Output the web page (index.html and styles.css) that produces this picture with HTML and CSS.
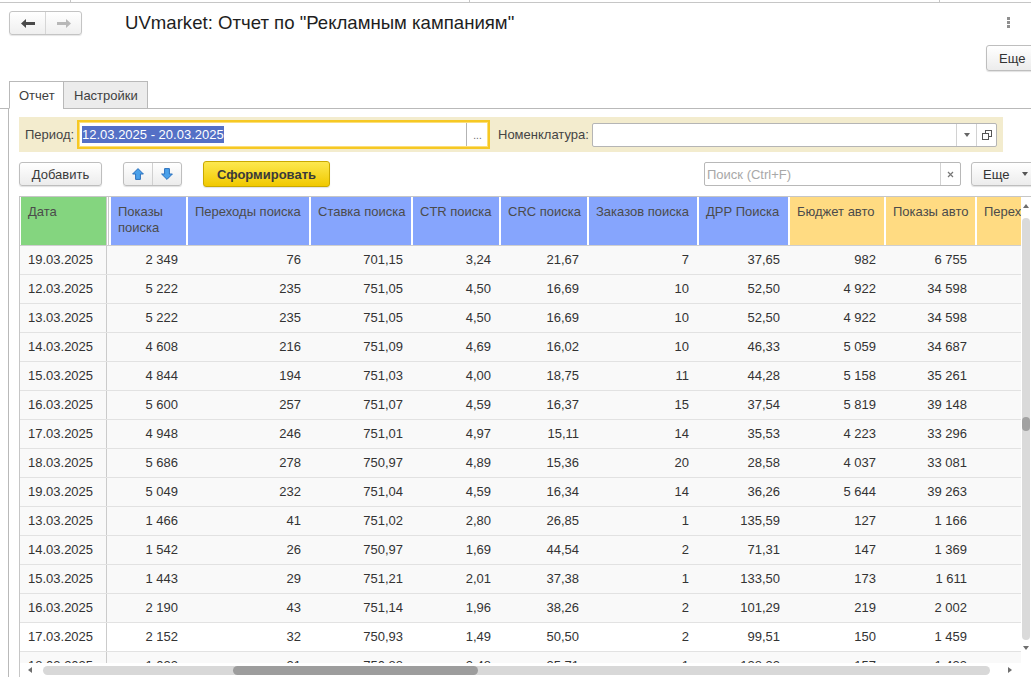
FILE: index.html
```html
<!DOCTYPE html>
<html lang="ru">
<head>
<meta charset="utf-8">
<title>UVmarket: Отчет по "Рекламным кампаниям"</title>
<link rel="stylesheet" href="styles.css">
</head>
<body>
<div class="strip"><div class="strip-seg s1"></div><div class="strip-seg s2"></div><div class="strip-seg s3"></div></div>
<header class="head">
  <div class="nav">
    <button class="nav-btn" aria-label="Назад"><svg width="14" height="9" viewBox="0 0 14 9"><path d="M0 4.5 5 0v3h9v3H5v3z" fill="#4a4a4a"/></svg></button>
    <button class="nav-btn" aria-label="Вперед"><svg width="14" height="9" viewBox="0 0 14 9"><path d="M14 4.5 9 0v3H0v3h9v3z" fill="#b8b8b8"/></svg></button>
  </div>
  <h1 class="title">UVmarket: Отчет по "Рекламным кампаниям"</h1>
  <div class="kebab"><span></span><span></span><span></span></div>
</header>
<div class="cmdbar"><button class="btn btn-top-more">Еще</button></div>
<div class="tabs">
  <div class="tab tab-report">Отчет</div>
  <div class="tab tab-settings">Настройки</div>
</div>
<main class="page">
  <div class="filters">
    <span class="flabel flabel-period">Период:</span>
    <div class="period">
      <span class="sel">12.03.2025 - 20.03.2025</span>
      <span class="period-btn">...</span>
    </div>
    <span class="flabel flabel-nom">Номенклатура:</span>
    <div class="nom">
      <span class="nom-text"></span>
      <span class="nom-btn"><svg width="6" height="4" viewBox="0 0 6 4"><path d="M0 0h6L3 4z" fill="#666"/></svg></span>
      <span class="nom-btn"><svg width="10" height="10" viewBox="0 0 10 10"><rect x="3.5" y=".5" width="6" height="6" fill="none" stroke="#555"/><rect x=".5" y="3.5" width="6" height="6" fill="#fff" stroke="#555"/></svg></span>
    </div>
  </div>
  <div class="toolbar">
    <button class="btn btn-add">Добавить</button>
    <div class="updown">
      <button class="ud-btn" aria-label="Вверх"><svg width="12" height="12" viewBox="0 0 12 12"><path d="M6 .6 11.4 6H8.4v5.4H3.6V6H.6z" fill="#4aa1ea" stroke="#2b70bd" stroke-linejoin="round"/></svg></button>
      <button class="ud-btn" aria-label="Вниз"><svg width="12" height="12" viewBox="0 0 12 12"><path d="M6 11.4 11.4 6H8.4V.6H3.6V6H.6z" fill="#4aa1ea" stroke="#2b70bd" stroke-linejoin="round"/></svg></button>
    </div>
    <button class="btn btn-form">Сформировать</button>
    <div class="search">
      <span class="search-ph">Поиск (Ctrl+F)</span>
      <span class="search-x"><svg width="7" height="7" viewBox="0 0 7 7"><path d="M1 1l5 5M6 1 1 6" stroke="#777" stroke-width="1.2"/></svg></span>
    </div>
    <button class="btn btn-more">Еще<svg class="more-caret" width="6" height="4" viewBox="0 0 6 4"><path d="M0 0h6L3 4z" fill="#555"/></svg></button>
  </div>
  <div class="table">
    <div class="grid-wrap">
      <div class="row hrow">
        <div class="hc c1 green">Дата</div>
        <div class="hc c2 blue">Показы<br>поиска</div>
        <div class="hc blue">Переходы поиска</div>
        <div class="hc blue">Ставка поиска</div>
        <div class="hc blue">CTR поиска</div>
        <div class="hc blue">CRC поиска</div>
        <div class="hc blue">Заказов поиска</div>
        <div class="hc blue">ДРР Поиска</div>
        <div class="hc yellow">Бюджет авто</div>
        <div class="hc yellow">Показы авто</div>
        <div class="hc yellow">Переходы авто</div>
      </div>
      <div class="row brow"><div class="bc c1">19.03.2025</div><div class="bc">2 349</div><div class="bc">76</div><div class="bc">701,15</div><div class="bc">3,24</div><div class="bc">21,67</div><div class="bc">7</div><div class="bc">37,65</div><div class="bc">982</div><div class="bc">6 755</div><div class="bc"></div></div>
      <div class="row brow"><div class="bc c1">12.03.2025</div><div class="bc">5 222</div><div class="bc">235</div><div class="bc">751,05</div><div class="bc">4,50</div><div class="bc">16,69</div><div class="bc">10</div><div class="bc">52,50</div><div class="bc">4 922</div><div class="bc">34 598</div><div class="bc"></div></div>
      <div class="row brow"><div class="bc c1">13.03.2025</div><div class="bc">5 222</div><div class="bc">235</div><div class="bc">751,05</div><div class="bc">4,50</div><div class="bc">16,69</div><div class="bc">10</div><div class="bc">52,50</div><div class="bc">4 922</div><div class="bc">34 598</div><div class="bc"></div></div>
      <div class="row brow"><div class="bc c1">14.03.2025</div><div class="bc">4 608</div><div class="bc">216</div><div class="bc">751,09</div><div class="bc">4,69</div><div class="bc">16,02</div><div class="bc">10</div><div class="bc">46,33</div><div class="bc">5 059</div><div class="bc">34 687</div><div class="bc"></div></div>
      <div class="row brow"><div class="bc c1">15.03.2025</div><div class="bc">4 844</div><div class="bc">194</div><div class="bc">751,03</div><div class="bc">4,00</div><div class="bc">18,75</div><div class="bc">11</div><div class="bc">44,28</div><div class="bc">5 158</div><div class="bc">35 261</div><div class="bc"></div></div>
      <div class="row brow"><div class="bc c1">16.03.2025</div><div class="bc">5 600</div><div class="bc">257</div><div class="bc">751,07</div><div class="bc">4,59</div><div class="bc">16,37</div><div class="bc">15</div><div class="bc">37,54</div><div class="bc">5 819</div><div class="bc">39 148</div><div class="bc"></div></div>
      <div class="row brow"><div class="bc c1">17.03.2025</div><div class="bc">4 948</div><div class="bc">246</div><div class="bc">751,01</div><div class="bc">4,97</div><div class="bc">15,11</div><div class="bc">14</div><div class="bc">35,53</div><div class="bc">4 223</div><div class="bc">33 296</div><div class="bc"></div></div>
      <div class="row brow"><div class="bc c1">18.03.2025</div><div class="bc">5 686</div><div class="bc">278</div><div class="bc">750,97</div><div class="bc">4,89</div><div class="bc">15,36</div><div class="bc">20</div><div class="bc">28,58</div><div class="bc">4 037</div><div class="bc">33 081</div><div class="bc"></div></div>
      <div class="row brow"><div class="bc c1">19.03.2025</div><div class="bc">5 049</div><div class="bc">232</div><div class="bc">751,04</div><div class="bc">4,59</div><div class="bc">16,34</div><div class="bc">14</div><div class="bc">36,26</div><div class="bc">5 644</div><div class="bc">39 263</div><div class="bc"></div></div>
      <div class="row brow"><div class="bc c1">13.03.2025</div><div class="bc">1 466</div><div class="bc">41</div><div class="bc">751,02</div><div class="bc">2,80</div><div class="bc">26,85</div><div class="bc">1</div><div class="bc">135,59</div><div class="bc">127</div><div class="bc">1 166</div><div class="bc"></div></div>
      <div class="row brow"><div class="bc c1">14.03.2025</div><div class="bc">1 542</div><div class="bc">26</div><div class="bc">750,97</div><div class="bc">1,69</div><div class="bc">44,54</div><div class="bc">2</div><div class="bc">71,31</div><div class="bc">147</div><div class="bc">1 369</div><div class="bc"></div></div>
      <div class="row brow"><div class="bc c1">15.03.2025</div><div class="bc">1 443</div><div class="bc">29</div><div class="bc">751,21</div><div class="bc">2,01</div><div class="bc">37,38</div><div class="bc">1</div><div class="bc">133,50</div><div class="bc">173</div><div class="bc">1 611</div><div class="bc"></div></div>
      <div class="row brow"><div class="bc c1">16.03.2025</div><div class="bc">2 190</div><div class="bc">43</div><div class="bc">751,14</div><div class="bc">1,96</div><div class="bc">38,26</div><div class="bc">2</div><div class="bc">101,29</div><div class="bc">219</div><div class="bc">2 002</div><div class="bc"></div></div>
      <div class="row brow row-white"><div class="bc c1">17.03.2025</div><div class="bc">2 152</div><div class="bc">32</div><div class="bc">750,93</div><div class="bc">1,49</div><div class="bc">50,50</div><div class="bc">2</div><div class="bc">99,51</div><div class="bc">150</div><div class="bc">1 459</div><div class="bc"></div></div>
      <div class="row brow"><div class="bc c1">18.03.2025</div><div class="bc">1 023</div><div class="bc">21</div><div class="bc">750,88</div><div class="bc">2,48</div><div class="bc">35,71</div><div class="bc">1</div><div class="bc">128,32</div><div class="bc">157</div><div class="bc">1 433</div><div class="bc"></div></div>
    </div>
    <div class="vscroll">
      <span class="arr arr-up"></span>
      <div class="vtrack"><div class="vthumb"></div></div>
      <span class="arr arr-down"></span>
    </div>
    <div class="hscroll">
      <span class="arr arr-left"></span>
      <div class="htrack"><div class="hthumb"></div></div>
      <span class="arr arr-right"></span>
    </div>
    <div class="corner"></div>
  </div>
</main>
</body>
</html>
```
FILE: styles.css
```css
* { box-sizing: border-box; }
html, body { margin: 0; padding: 0; }
body {
  width: 1031px;
  height: 677px;
  overflow: hidden;
  background: #fff;
  font-family: "Liberation Sans", Arial, sans-serif;
  font-size: 13px;
  color: #333;
}
button {
  font-family: inherit;
  font-size: 13px;
  color: #333;
  margin: 0;
  padding: 0;
  cursor: default;
}

/* top strip */
.strip { display: flex; height: 3px; border-bottom: 1px solid #c6c6c6; }
.strip-seg { height: 2px; border-right: 1px solid #c6c6c6; }
.s1 { width: 71px; }
.s2 { width: 399px; }
.s3 { width: 470px; }

/* header */
.head { display: flex; align-items: center; height: 32px; padding: 8px 0 0 9px; }
.nav {
  display: flex;
  width: 73px;
  height: 24px;
  border: 1px solid #c4c4c4;
  border-radius: 3px;
  background: linear-gradient(#ffffff, #efefef);
  box-shadow: 0 1px 1px rgba(0,0,0,.1);
  overflow: hidden;
  flex-shrink: 0;
}
.nav-btn {
  flex: 1;
  display: flex;
  align-items: center;
  justify-content: center;
  border: 0;
  background: transparent;
}
.nav-btn + .nav-btn { border-left: 1px solid #d6d6d6; }
.title {
  margin: 0 0 0 43px;
  font-size: 18.6px;
  font-weight: normal;
  color: #1e1e1e;
  white-space: nowrap;
}
.kebab {
  margin-left: auto;
  margin-right: 21px;
  align-self: flex-start;
  margin-top: 6px;
  display: flex;
  flex-direction: column;
  gap: 1px;
}
.kebab span { width: 3px; height: 3px; background: #8f8f8f; }

/* generic button */
.btn {
  height: 24px;
  border: 1px solid #bebebe;
  border-radius: 3px;
  background: linear-gradient(#ffffff, #ececec);
  box-shadow: 0 1px 1px rgba(0,0,0,.12);
  display: flex;
  align-items: center;
  justify-content: center;
  flex-shrink: 0;
}

.cmdbar { display: flex; justify-content: flex-end; padding-top: 10px; height: 36px; }
.btn-top-more { width: 50px; height: 26px; margin-right: -5px; justify-content: flex-start; padding-left: 12px; }

/* tabs */
.tabs {
  display: flex;
  margin-top: 10px;
  padding-left: 9px;
  height: 28px;
  border-bottom: 1px solid #b9b9b9;
}
.tab {
  height: 28px;
  border: 1px solid #b9b9b9;
  display: flex;
  align-items: center;
  color: #404040;
  flex-shrink: 0;
}
.tab-report { width: 55px; padding-left: 9px; background: #fff; border-bottom-color: #fff; }
.tab-settings { width: 85px; margin-left: -1px; padding-left: 10px; background: #ececec; }

/* page */
.page {
  margin-left: 8px;
  border-left: 1px solid #b9b9b9;
  padding: 8px 0 0 10px;
  height: 568px;
}

/* filters */
.filters {
  display: flex;
  align-items: center;
  width: 984px;
  height: 35px;
  background: #f3ecce;
  padding-left: 6px;
}
.flabel { flex-shrink: 0; color: #444; white-space: nowrap; }
.flabel-period { width: 52px; }
.flabel-nom { width: 94px; margin-left: 8px; }
.period {
  flex-shrink: 0;
  width: 413px;
  height: 29px;
  border: 2px solid #f6c824;
  box-shadow: inset 0 0 0 1px #fcdf78;
  background: #fff;
  display: flex;
  align-items: center;
  padding-left: 3px;
}
.sel {
  display: inline-block;
  height: 17px;
  line-height: 17px;
  background: #5470c6;
  color: #fff;
  white-space: nowrap;
}
.period-btn {
  margin-left: auto;
  width: 22px;
  height: 23px;
  border-left: 1px solid #b3b3b3;
  color: #666;
  font-size: 10px;
  line-height: 26px;
  text-align: center;
}
.nom {
  flex-shrink: 0;
  width: 405px;
  height: 24px;
  border: 1px solid #b5b5b5;
  border-radius: 2px;
  background: #fff;
  display: flex;
}
.nom-text { flex: 1; }
.nom-btn {
  width: 20px;
  border-left: 1px solid #d2d2d2;
  display: flex;
  align-items: center;
  justify-content: center;
}

/* toolbar */
.toolbar { display: flex; align-items: center; margin-top: 10px; height: 24px; }
.btn-add { width: 83px; color: #3a3a3a; }
.updown {
  flex-shrink: 0;
  display: flex;
  margin-left: 21px;
  width: 59px;
  height: 24px;
  border: 1px solid #bebebe;
  border-radius: 3px;
  background: linear-gradient(#ffffff, #ececec);
  box-shadow: 0 1px 1px rgba(0,0,0,.12);
  overflow: hidden;
}
.ud-btn {
  flex: 1;
  border: 0;
  background: transparent;
  display: flex;
  align-items: center;
  justify-content: center;
}
.ud-btn + .ud-btn { border-left: 1px solid #d0d0d0; }
.btn-form {
  margin-left: 21px;
  width: 127px;
  height: 26px;
  background: linear-gradient(#fde84f, #f1c900);
  border-color: #c9a900;
  font-weight: bold;
  color: #3a3a3a;
}
.search {
  flex-shrink: 0;
  margin-left: 374px;
  width: 257px;
  height: 24px;
  border: 1px solid #b8b8b8;
  border-radius: 2px;
  background: #fff;
  display: flex;
  align-items: center;
}
.search-ph { flex: 1; padding-left: 2px; color: #a8a8a8; white-space: nowrap; }
.search-x {
  width: 20px;
  height: 22px;
  border-left: 1px solid #d2d2d2;
  display: flex;
  align-items: center;
  justify-content: center;
}
.btn-more { margin-left: 10px; width: 70px; justify-content: flex-start; padding-left: 11px; }
.more-caret { margin-left: 13px; }

/* table */
.table {
  margin-top: 10px;
  display: grid;
  grid-template-columns: 1001px 10px;
  grid-template-rows: 466px 14px;
  width: 1012px;
  border-top: 1px solid #c6c6c6;
  border-left: 1px solid #c6c6c6;
}
.grid-wrap { overflow: hidden; }
.row {
  display: grid;
  grid-template-columns: 87px 80px 123px 102px 88px 88px 110px 91px 96px 91px 130px;
}
.hrow { height: 49px; border-bottom: 1px solid #cfcfcf; background: #fff; }
.hc {
  margin: 0 1px;
  padding: 7px 4px 0 7px;
  line-height: 16px;
  color: #4b4b4b;
  white-space: nowrap;
  overflow: hidden;
}
.hc.c1 { box-shadow: 1px 0 0 #c9c9c9; }
.green { background: #84d57f; }
.blue { background: #86a5fd; }
.yellow { background: #ffdb82; }
.hc.c2 {
  margin-left: 1px;
  padding-left: 10px;
  background: linear-gradient(to right, #c9c9c9 0 1px, #fff 1px 3px, #86a5fd 3px);
}

.brow {
  height: 29px;
  line-height: 28px;
  border-bottom: 1px solid #e2e2e2;
  background: #f9f9f9;
}
.row-white { background: #fff; }
.bc {
  padding: 0 9px 0 8px;
  text-align: right;
  white-space: nowrap;
  overflow: hidden;
}
.bc.c1 { text-align: left; border-right: 1px solid #cbcbcb; }

/* scrollbars */
.arr { width: 0; height: 0; display: block; flex-shrink: 0; }
.arr-up { border-left: 3px solid transparent; border-right: 3px solid transparent; border-bottom: 4px solid #6e6e6e; }
.arr-down { border-left: 3px solid transparent; border-right: 3px solid transparent; border-top: 4px solid #6e6e6e; margin-top: 6px; }
.arr-left { border-top: 3px solid transparent; border-bottom: 3px solid transparent; border-right: 4px solid #6e6e6e; }
.arr-right { border-top: 3px solid transparent; border-bottom: 3px solid transparent; border-left: 4px solid #6e6e6e; margin-left: 18px; }

.vscroll {
  display: flex;
  flex-direction: column;
  align-items: center;
  padding-top: 7px;
  background: #fff;
}
.vtrack {
  margin-top: 10px;
  width: 8px;
  height: 422px;
  border-radius: 4px;
  background: #dadada;
  display: flex;
  flex-direction: column;
}
.vthumb { margin-top: 199px; height: 14px; border-radius: 4px; background: #a2a2a2; }

.hscroll {
  display: flex;
  align-items: center;
  padding-left: 8px;
  background: #fff;
}
.htrack {
  margin-left: 11px;
  width: 947px;
  height: 9px;
  border-radius: 5px;
  background: #d8d8d8;
  display: flex;
  flex-shrink: 0;
}
.hthumb { margin-left: 190px; width: 245px; border-radius: 5px; background: #9d9d9d; }
.corner { background: #fff; }
```
